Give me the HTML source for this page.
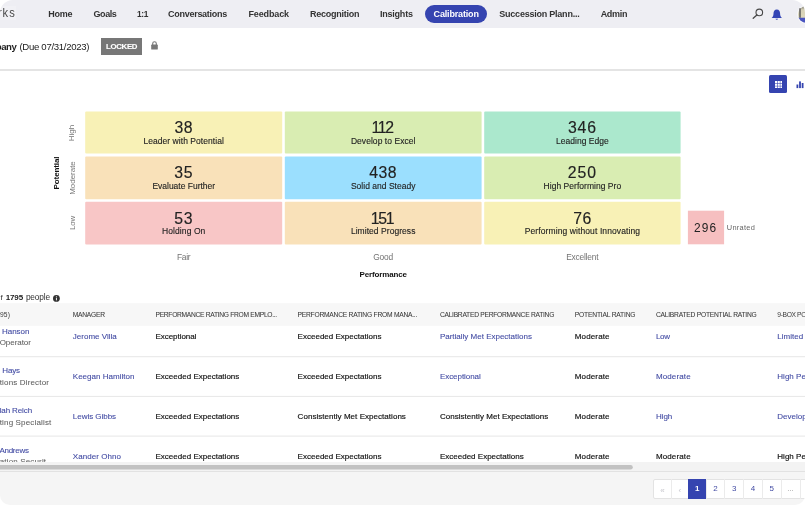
<!DOCTYPE html>
<html><head><meta charset="utf-8">
<title>Calibration</title>
<style>
*{box-sizing:border-box;margin:0;padding:0}
html,body{width:805px;height:510px;overflow:hidden;background:#fff}
body{font-family:"Liberation Sans",sans-serif;color:#222;position:relative}
#win{position:absolute;left:0;top:0;width:805px;height:505px;border-radius:13px 13px 10px 10px;overflow:hidden;background:#fff}
#in{position:absolute;left:0;top:0;width:805px;height:505px;will-change:transform}
.a{position:absolute;white-space:nowrap;line-height:1}
</style></head><body>
<div id="win"><div id="in">
<div class="a" style="left:0px;top:0px;width:805px;height:28px;background:#eeeef3;"></div>
<div class="a" style="left:0px;top:6px;width:15.5px;height:13.5px;background:#f1f1f5;"></div>
<svg class="a" style="left:0;top:4px" width="20" height="18"><text transform="scale(0.84 1)" x="-2.3 3 10.9" y="12.8" font-family="Liberation Sans, sans-serif" font-size="13.3" fill="#4a4a4a">rks</text></svg>
<span class="a" style="left:48.2px;top:9px;font-size:9px;line-height:10px;letter-spacing:-0.23px;font-weight:bold;color:#333;">Home</span>
<span class="a" style="left:93.4px;top:9px;font-size:9px;line-height:10px;letter-spacing:-0.38px;font-weight:bold;color:#333;">Goals</span>
<span class="a" style="left:168px;top:9px;font-size:9px;line-height:10px;letter-spacing:-0.27px;font-weight:bold;color:#333;">Conversations</span>
<span class="a" style="left:248.4px;top:9px;font-size:9px;line-height:10px;letter-spacing:-0.12px;font-weight:bold;color:#333;">Feedback</span>
<span class="a" style="left:309.9px;top:9px;font-size:9px;line-height:10px;letter-spacing:-0.25px;font-weight:bold;color:#333;">Recognition</span>
<span class="a" style="left:379.9px;top:9px;font-size:9px;line-height:10px;letter-spacing:-0.21px;font-weight:bold;color:#333;">Insights</span>
<span class="a" style="left:137px;top:9px;font-size:8.4px;line-height:10px;letter-spacing:-0.31px;font-weight:bold;color:#333;">1:1</span>
<div class="a" style="left:425px;top:5px;width:61.6px;height:18px;background:#3544b0;border-radius:9px"></div>
<span class="a" style="left:433.6px;top:9px;font-size:9px;line-height:10px;letter-spacing:-0.17px;font-weight:bold;color:#fff;">Calibration</span>
<span class="a" style="left:499.3px;top:9px;font-size:9px;line-height:10px;letter-spacing:-0.23px;font-weight:bold;color:#333;">Succession Plann...</span>
<span class="a" style="left:600.7px;top:9px;font-size:9px;line-height:10px;letter-spacing:-0.32px;font-weight:bold;color:#333;">Admin</span>
<svg class="a" style="left:751px;top:7px" width="14" height="13" viewBox="0 0 14 13"><circle cx="8.3" cy="5.4" r="3.3" fill="none" stroke="#484848" stroke-width="1.1"/><path d="M5.9 7.9 L2.2 11.3" stroke="#484848" stroke-width="1.3" stroke-linecap="round"/></svg>
<svg class="a" style="left:771.2px;top:8.5px" width="11.6" height="12.6" viewBox="0 0 12 13"><path d="M6 0.6 C3.6 0.6 2.6 2.6 2.6 4.6 C2.6 7 1.8 8.2 0.6 9.4 L11.4 9.4 C10.2 8.2 9.4 7 9.4 4.6 C9.4 2.6 8.4 0.6 6 0.6 Z M4.6 10.2 A1.5 1.5 0 0 0 7.4 10.2 Z" fill="#3344b5"/></svg>
<div class="a" style="left:798.2px;top:5.6px;width:17.6px;height:17.6px;background:linear-gradient(#77756c 0,#d6d1b6 22%,#ddd8bc 66%,#4a55c0 72%);border-radius:9px;box-shadow:0 0 0 1px #f8f8fa"></div>
<div class="a" style="left:799px;top:8px;width:1.6px;height:9.5px;background:#5a5a58;border-radius:1px;opacity:.75"></div>
<span class="a" style="left:-4.2px;top:41px;font-size:9.6px;line-height:11px;letter-spacing:-0.45px;font-weight:bold;">pany</span>
<span class="a" style="left:19.4px;top:41px;font-size:9.6px;line-height:11px;letter-spacing:-0.3px;">(Due 07/31/2023)</span>
<div class="a" style="left:101.4px;top:38px;width:40.5px;height:16.8px;background:#777;"></div>
<span class="a" style="left:106px;top:42px;font-size:7.8px;line-height:9px;letter-spacing:-0.29px;font-weight:bold;color:#fff;-webkit-text-stroke:0.12px #fff;">LOCKED</span>
<svg class="a" style="left:151px;top:41px" width="7" height="9" viewBox="0 0 7 9"><rect x="0.2" y="3.6" width="6.6" height="5" rx="0.6" fill="#777"/><path d="M1.7 4 V2.6 A1.8 1.8 0 0 1 5.3 2.6 V4" fill="none" stroke="#777" stroke-width="1.1"/></svg>
<div class="a" style="left:0px;top:69.1px;width:805px;height:1.7px;background:#e4e4e4;"></div>
<div class="a" style="left:769px;top:75px;width:18px;height:18px;background:#3544b0;border-radius:1.5px"></div>
<svg class="a" style="left:774.8px;top:80.6px" width="7.5" height="7.5" viewBox="0 0 7.5 7.5" fill="#fff"><rect x="0" y="0" width="2.15" height="2.15"/><rect x="2.67" y="0" width="2.15" height="2.15"/><rect x="5.35" y="0" width="2.15" height="2.15"/><rect x="0" y="2.67" width="2.15" height="2.15"/><rect x="2.67" y="2.67" width="2.15" height="2.15"/><rect x="5.35" y="2.67" width="2.15" height="2.15"/><rect x="0" y="5.35" width="2.15" height="2.15"/><rect x="2.67" y="5.35" width="2.15" height="2.15"/><rect x="5.35" y="5.35" width="2.15" height="2.15"/></svg>
<svg class="a" style="left:795.5px;top:80.5px" width="8" height="8" viewBox="0 0 8 8" fill="#3544b0"><rect x="0.5" y="3.5" width="1.8" height="3.6"/><rect x="3.1" y="0.4" width="1.8" height="6.7"/><rect x="5.7" y="2" width="1.8" height="5.1"/></svg>
<svg class="a" style="left:0;top:0" width="805" height="300"><rect x="85.2" y="111.5" width="197" height="42.1" rx="1" fill="#f8f1b6"/><rect x="284.8" y="111.5" width="196.8" height="42.1" rx="1" fill="#d9edb2"/><rect x="484.2" y="111.5" width="196.4" height="42.1" rx="1" fill="#abe8cd"/><rect x="85.2" y="156.4" width="197" height="42.8" rx="1" fill="#f9e1b9"/><rect x="284.8" y="156.4" width="196.8" height="42.8" rx="1" fill="#9bdffe"/><rect x="484.2" y="156.4" width="196.4" height="42.8" rx="1" fill="#d9edb2"/><rect x="85.2" y="201.8" width="197" height="42.6" rx="1" fill="#f8c6c6"/><rect x="284.8" y="201.8" width="196.8" height="42.6" rx="1" fill="#f9e1b9"/><rect x="484.2" y="201.8" width="196.4" height="42.6" rx="1" fill="#f8f1b6"/><rect x="687.9" y="210.7" width="36.2" height="33.6" fill="#f6bfc0"/></svg>
<span class="a" style="left:174.45px;top:119px;font-size:15.8px;line-height:17px;letter-spacing:0.46px;-webkit-text-stroke:0.15px #222;">38</span>
<span class="a" style="left:143.45px;top:136px;font-size:8.5px;line-height:10px;letter-spacing:0.05px;-webkit-text-stroke:0.12px #222;">Leader with Potential</span>
<span class="a" style="left:371.46px;top:119px;font-size:15.8px;line-height:17px;letter-spacing:-1.3px;-webkit-text-stroke:0.15px #222;">112</span>
<span class="a" style="left:350.9px;top:136px;font-size:8.5px;line-height:10px;letter-spacing:0.05px;-webkit-text-stroke:0.12px #222;">Develop to Excel</span>
<span class="a" style="left:568px;top:119px;font-size:15.8px;line-height:17px;letter-spacing:0.81px;-webkit-text-stroke:0.15px #222;">346</span>
<span class="a" style="left:556.05px;top:136px;font-size:8.5px;line-height:10px;letter-spacing:0.02px;-webkit-text-stroke:0.12px #222;">Leading Edge</span>
<span class="a" style="left:174.15px;top:164px;font-size:15.8px;line-height:17px;letter-spacing:0.76px;-webkit-text-stroke:0.15px #222;">35</span>
<span class="a" style="left:152.4px;top:181px;font-size:8.5px;line-height:10px;letter-spacing:-0.01px;-webkit-text-stroke:0.12px #222;">Evaluate Further</span>
<span class="a" style="left:369.2px;top:164px;font-size:15.8px;line-height:17px;letter-spacing:0.55px;-webkit-text-stroke:0.15px #222;">438</span>
<span class="a" style="left:350.9px;top:181px;font-size:8.5px;line-height:10px;letter-spacing:0.02px;-webkit-text-stroke:0.12px #222;">Solid and Steady</span>
<span class="a" style="left:567.7px;top:164px;font-size:15.8px;line-height:17px;letter-spacing:1.01px;-webkit-text-stroke:0.15px #222;">250</span>
<span class="a" style="left:543.6px;top:181px;font-size:8.5px;line-height:10px;letter-spacing:0.03px;-webkit-text-stroke:0.12px #222;">High Performing Pro</span>
<span class="a" style="left:174.3px;top:210px;font-size:15.8px;line-height:17px;letter-spacing:0.61px;-webkit-text-stroke:0.15px #222;">53</span>
<span class="a" style="left:162px;top:226px;font-size:8.5px;line-height:10px;letter-spacing:0.09px;-webkit-text-stroke:0.12px #222;">Holding On</span>
<span class="a" style="left:370.87px;top:210px;font-size:15.8px;line-height:17px;letter-spacing:-1.3px;-webkit-text-stroke:0.15px #222;">151</span>
<span class="a" style="left:350.9px;top:226px;font-size:8.5px;line-height:10px;letter-spacing:0.05px;-webkit-text-stroke:0.12px #222;">Limited Progress</span>
<span class="a" style="left:573.25px;top:210px;font-size:15.8px;line-height:17px;letter-spacing:0.36px;-webkit-text-stroke:0.15px #222;">76</span>
<span class="a" style="left:524.75px;top:226px;font-size:8.5px;line-height:10px;letter-spacing:0.1px;-webkit-text-stroke:0.12px #222;">Performing without Innovating</span>
<span class="a" style="left:694px;top:221px;font-size:11.9px;line-height:14px;letter-spacing:1.18px;">296</span>
<span class="a" style="left:726.8px;top:223px;font-size:7.4px;line-height:9px;letter-spacing:0.28px;color:#666;">Unrated</span>
<span class="a" style="left:176.9px;top:252px;font-size:8.4px;line-height:10px;letter-spacing:-0.22px;color:#737373;">Fair</span>
<span class="a" style="left:373.2px;top:252px;font-size:8.4px;line-height:10px;letter-spacing:-0.19px;color:#737373;">Good</span>
<span class="a" style="left:566.2px;top:252px;font-size:8.4px;line-height:10px;letter-spacing:-0.21px;color:#737373;">Excellent</span>
<span class="a" style="left:359.6px;top:270px;font-size:8px;line-height:9px;letter-spacing:-0.16px;font-weight:bold;color:#111;">Performance</span>
<span class="a" style="left:64.43px;top:128.7px;width:16.4px;font-size:8px;letter-spacing:-0.01px;transform:rotate(-90deg);color:#777;">High</span>
<span class="a" style="left:55.88px;top:173.6px;width:33.5px;font-size:8px;letter-spacing:-0.04px;transform:rotate(-90deg);color:#777;">Moderate</span>
<span class="a" style="left:65.53px;top:219px;width:14.2px;font-size:8px;letter-spacing:-0.16px;transform:rotate(-90deg);color:#777;">Low</span>
<span class="a" style="left:40.83px;top:168.6px;width:32.8px;font-size:8px;letter-spacing:-0.11px;transform:rotate(-90deg);color:#111;font-weight:bold;">Potential</span>
<span class="a" style="left:0.4px;top:293px;font-size:8px;line-height:9px;color:#333;">f</span>
<span class="a" style="left:5.7px;top:293px;font-size:8px;line-height:9px;letter-spacing:-0.12px;font-weight:bold;">1795</span>
<span class="a" style="left:25.9px;top:292px;font-size:8.3px;line-height:10px;letter-spacing:-0.14px;color:#333;">people</span>
<svg class="a" style="left:53.4px;top:294.8px" width="6.8" height="6.8" viewBox="0 0 6 6"><circle cx="3" cy="3" r="3" fill="#333"/><rect x="2.6" y="2.5" width="0.8" height="2.2" fill="#fff"/><circle cx="3" cy="1.5" r="0.5" fill="#fff"/></svg>
<svg class="a" style="left:0;top:300px" width="805" height="30"><rect x="0" y="3.2" width="805" height="22.6" fill="#f7f7f7"/></svg>
<span class="a" style="left:0px;top:311px;font-size:6.7px;line-height:7px;letter-spacing:0.11px;color:#3a3a3a;">95)</span>
<span class="a" style="left:72.8px;top:311px;font-size:6.7px;line-height:7px;letter-spacing:-0.27px;color:#3a3a3a;-webkit-text-stroke:0.06px #3a3a3a;">MANAGER</span>
<span class="a" style="left:155.5px;top:311px;font-size:6.7px;line-height:7px;letter-spacing:-0.3px;color:#3a3a3a;-webkit-text-stroke:0.06px #3a3a3a;">PERFORMANCE RATING FROM EMPLO...</span>
<span class="a" style="left:297.6px;top:311px;font-size:6.7px;line-height:7px;letter-spacing:-0.24px;color:#3a3a3a;-webkit-text-stroke:0.06px #3a3a3a;">PERFORMANCE RATING FROM MANA...</span>
<span class="a" style="left:439.9px;top:311px;font-size:6.7px;line-height:7px;letter-spacing:-0.27px;color:#3a3a3a;-webkit-text-stroke:0.06px #3a3a3a;">CALIBRATED PERFORMANCE RATING</span>
<span class="a" style="left:574.8px;top:311px;font-size:6.7px;line-height:7px;letter-spacing:-0.19px;color:#3a3a3a;-webkit-text-stroke:0.06px #3a3a3a;">POTENTIAL RATING</span>
<span class="a" style="left:655.9px;top:311px;font-size:6.7px;line-height:7px;letter-spacing:-0.23px;color:#3a3a3a;-webkit-text-stroke:0.06px #3a3a3a;">CALIBRATED POTENTIAL RATING</span>
<span class="a" style="left:777.3px;top:311px;font-size:6.7px;line-height:7px;color:#3a3a3a;letter-spacing:-0.35px;">9-BOX POSITION</span>
<span class="a" style="left:2px;top:327px;font-size:8px;line-height:9px;letter-spacing:-0.05px;color:#424ba3;-webkit-text-stroke:0.1px #424ba3;">Hanson</span>
<span class="a" style="left:-0.3px;top:338px;font-size:8px;line-height:9px;letter-spacing:-0.06px;color:#5c5c5c;-webkit-text-stroke:0.05px #5c5c5c;">Operator</span>
<span class="a" style="left:72.8px;top:332px;font-size:8px;line-height:9px;letter-spacing:0.01px;color:#424ba3;-webkit-text-stroke:0.1px #424ba3;">Jerome Villa</span>
<span class="a" style="left:155.5px;top:332px;font-size:8px;line-height:9px;letter-spacing:-0.05px;color:#111;-webkit-text-stroke:0.17px #111;">Exceptional</span>
<span class="a" style="left:297.6px;top:332px;font-size:8px;line-height:9px;letter-spacing:0.01px;color:#111;-webkit-text-stroke:0.17px #111;">Exceeded Expectations</span>
<span class="a" style="left:439.9px;top:332px;font-size:8px;line-height:9px;letter-spacing:0px;color:#424ba3;-webkit-text-stroke:0.1px #424ba3;">Partially Met Expectations</span>
<span class="a" style="left:574.8px;top:332px;font-size:8px;line-height:9px;letter-spacing:0.14px;color:#111;-webkit-text-stroke:0.17px #111;">Moderate</span>
<span class="a" style="left:655.9px;top:332px;font-size:8px;line-height:9px;letter-spacing:-0.23px;color:#424ba3;-webkit-text-stroke:0.1px #424ba3;">Low</span>
<span class="a" style="left:777.3px;top:332px;font-size:8px;line-height:9px;letter-spacing:0.02px;color:#424ba3;-webkit-text-stroke:0.1px #424ba3;">Limited Progress</span>
<span class="a" style="left:2.3px;top:366px;font-size:8px;line-height:9px;letter-spacing:-0.18px;color:#424ba3;-webkit-text-stroke:0.1px #424ba3;">Hays</span>
<span class="a" style="left:-0.3px;top:378px;font-size:8px;line-height:9px;letter-spacing:0.16px;color:#5c5c5c;-webkit-text-stroke:0.05px #5c5c5c;">tions Director</span>
<span class="a" style="left:72.8px;top:372px;font-size:8px;line-height:9px;letter-spacing:0.02px;color:#424ba3;-webkit-text-stroke:0.1px #424ba3;">Keegan Hamilton</span>
<span class="a" style="left:155.5px;top:372px;font-size:8px;line-height:9px;letter-spacing:0.01px;color:#111;-webkit-text-stroke:0.17px #111;">Exceeded Expectations</span>
<span class="a" style="left:297.6px;top:372px;font-size:8px;line-height:9px;letter-spacing:0.01px;color:#111;-webkit-text-stroke:0.17px #111;">Exceeded Expectations</span>
<span class="a" style="left:439.9px;top:372px;font-size:8px;line-height:9px;letter-spacing:-0.05px;color:#424ba3;-webkit-text-stroke:0.1px #424ba3;">Exceptional</span>
<span class="a" style="left:574.8px;top:372px;font-size:8px;line-height:9px;letter-spacing:0.14px;color:#111;-webkit-text-stroke:0.17px #111;">Moderate</span>
<span class="a" style="left:655.9px;top:372px;font-size:8px;line-height:9px;letter-spacing:0.14px;color:#424ba3;-webkit-text-stroke:0.1px #424ba3;">Moderate</span>
<span class="a" style="left:777.3px;top:372px;font-size:8px;line-height:9px;letter-spacing:0.02px;color:#424ba3;-webkit-text-stroke:0.1px #424ba3;">High Performing Pro</span>
<span class="a" style="left:-0.3px;top:406px;font-size:8px;line-height:9px;letter-spacing:-0.12px;color:#424ba3;-webkit-text-stroke:0.1px #424ba3;">lah Reich</span>
<span class="a" style="left:-0.3px;top:418px;font-size:8px;line-height:9px;letter-spacing:0.16px;color:#5c5c5c;-webkit-text-stroke:0.05px #5c5c5c;">ting Specialist</span>
<span class="a" style="left:72.8px;top:412px;font-size:8px;line-height:9px;letter-spacing:-0.03px;color:#424ba3;-webkit-text-stroke:0.1px #424ba3;">Lewis Gibbs</span>
<span class="a" style="left:155.5px;top:412px;font-size:8px;line-height:9px;letter-spacing:0.01px;color:#111;-webkit-text-stroke:0.17px #111;">Exceeded Expectations</span>
<span class="a" style="left:297.6px;top:412px;font-size:8px;line-height:9px;letter-spacing:0.04px;color:#111;-webkit-text-stroke:0.17px #111;">Consistently Met Expectations</span>
<span class="a" style="left:439.9px;top:412px;font-size:8px;line-height:9px;letter-spacing:0.04px;color:#111;-webkit-text-stroke:0.17px #111;">Consistently Met Expectations</span>
<span class="a" style="left:574.8px;top:412px;font-size:8px;line-height:9px;letter-spacing:0.14px;color:#111;-webkit-text-stroke:0.17px #111;">Moderate</span>
<span class="a" style="left:655.9px;top:412px;font-size:8px;line-height:9px;letter-spacing:-0.01px;color:#424ba3;-webkit-text-stroke:0.1px #424ba3;">High</span>
<span class="a" style="left:777.3px;top:412px;font-size:8px;line-height:9px;letter-spacing:0.02px;color:#424ba3;-webkit-text-stroke:0.1px #424ba3;">Develop to Excel</span>
<span class="a" style="left:-0.5px;top:446px;font-size:8px;line-height:9px;letter-spacing:-0.29px;color:#424ba3;-webkit-text-stroke:0.1px #424ba3;">Andrews</span>
<span class="a" style="left:-0.3px;top:457px;font-size:8px;line-height:9px;letter-spacing:0.16px;color:#5c5c5c;-webkit-text-stroke:0.05px #5c5c5c;">ation Securit</span>
<span class="a" style="left:72.8px;top:452px;font-size:8px;line-height:9px;letter-spacing:0.06px;color:#424ba3;-webkit-text-stroke:0.1px #424ba3;">Xander Ohno</span>
<span class="a" style="left:155.5px;top:452px;font-size:8px;line-height:9px;letter-spacing:0.01px;color:#111;-webkit-text-stroke:0.17px #111;">Exceeded Expectations</span>
<span class="a" style="left:297.6px;top:452px;font-size:8px;line-height:9px;letter-spacing:0.01px;color:#111;-webkit-text-stroke:0.17px #111;">Exceeded Expectations</span>
<span class="a" style="left:439.9px;top:452px;font-size:8px;line-height:9px;letter-spacing:0.01px;color:#111;-webkit-text-stroke:0.17px #111;">Exceeded Expectations</span>
<span class="a" style="left:574.8px;top:452px;font-size:8px;line-height:9px;letter-spacing:0.14px;color:#111;-webkit-text-stroke:0.17px #111;">Moderate</span>
<span class="a" style="left:655.9px;top:452px;font-size:8px;line-height:9px;letter-spacing:0.14px;color:#111;-webkit-text-stroke:0.17px #111;">Moderate</span>
<span class="a" style="left:777.3px;top:452px;font-size:8px;line-height:9px;letter-spacing:0.02px;color:#111;-webkit-text-stroke:0.17px #111;">High Performing Pro</span>
<div class="a" style="left:0px;top:462.4px;width:805px;height:43px;background:#f5f5f5;"></div>
<div class="a" style="left:0px;top:462.4px;width:805px;height:8.6px;background:#f3f3f3;"></div>
<div class="a" style="left:0px;top:471px;width:805px;height:0.8px;background:#e2e2e2;"></div>
<svg class="a" style="left:0;top:0" width="805" height="505"><rect x="0" y="356.2" width="805" height="1" fill="#e7e7e7"/><rect x="0" y="395.9" width="805" height="1" fill="#e7e7e7"/><rect x="0" y="435.6" width="805" height="1" fill="#e7e7e7"/><rect x="-10" y="465" width="642.8" height="4.6" rx="2.3" fill="#c2c2c2"/></svg>
<div class="a" style="left:653.3px;top:479.2px;width:170px;height:19.4px;background:#fff;border:1px solid #e3e3e3;border-radius:2px"></div>
<div class="a" style="left:670.9px;top:479.2px;width:1px;height:19.4px;background:#ebebeb;"></div>
<div class="a" style="left:687.7px;top:479.2px;width:1px;height:19.4px;background:#ebebeb;"></div>
<div class="a" style="left:705.5px;top:479.2px;width:1px;height:19.4px;background:#ebebeb;"></div>
<div class="a" style="left:724.3px;top:479.2px;width:1px;height:19.4px;background:#ebebeb;"></div>
<div class="a" style="left:743.1px;top:479.2px;width:1px;height:19.4px;background:#ebebeb;"></div>
<div class="a" style="left:761.7px;top:479.2px;width:1px;height:19.4px;background:#ebebeb;"></div>
<div class="a" style="left:780.5px;top:479.2px;width:1px;height:19.4px;background:#ebebeb;"></div>
<div class="a" style="left:799.5px;top:479.2px;width:1px;height:19.4px;background:#ebebeb;"></div>
<div class="a" style="left:688.2px;top:479.2px;width:17.8px;height:19.4px;background:#3544b0;"></div>
<span class="a" style="left:660.13px;top:486px;font-size:8px;line-height:9px;color:#c6c6cc;">«</span>
<span class="a" style="left:678.47px;top:486px;font-size:8px;line-height:9px;color:#c6c6cc;">‹</span>
<span class="a" style="left:694.88px;top:484px;font-size:8px;line-height:9px;font-weight:bold;color:#fff;">1</span>
<span class="a" style="left:713.18px;top:484px;font-size:8px;line-height:9px;color:#424ba3;">2</span>
<span class="a" style="left:731.98px;top:484px;font-size:8px;line-height:9px;color:#424ba3;">3</span>
<span class="a" style="left:750.68px;top:484px;font-size:8px;line-height:9px;color:#424ba3;">4</span>
<span class="a" style="left:769.38px;top:484px;font-size:8px;line-height:9px;color:#424ba3;">5</span>
<span class="a" style="left:787.17px;top:484px;font-size:8px;line-height:9px;color:#999;">...</span>
</div></div>
</body></html>
